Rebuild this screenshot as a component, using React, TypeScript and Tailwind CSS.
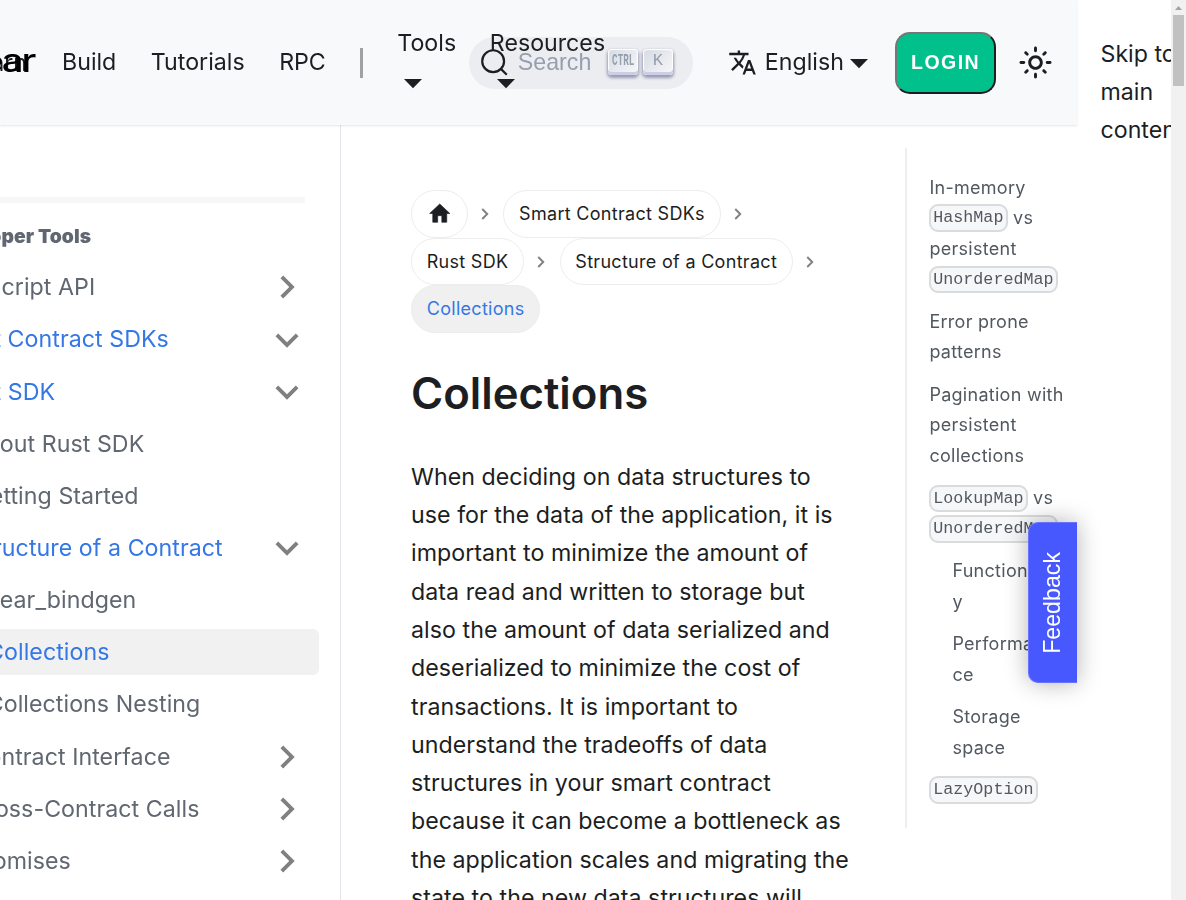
import React from "react";
import { MdTranslate } from "react-icons/md";

type Item = { label: string; indent: string; open?: boolean; arrow?: boolean; blue?: boolean; active?: boolean };

const items: Item[] = [
  { label: "JavaScript API", indent: "pl-[0px]", arrow: true },
  { label: "Smart Contract SDKs", indent: "pl-[1.4px]", arrow: true, open: true, blue: true },
  { label: "Rust SDK", indent: "pl-[18px]", arrow: true, open: true, blue: true },
  { label: "About Rust SDK", indent: "pl-[35px]" },
  { label: "Getting Started", indent: "pl-[38px]" },
  { label: "Structure of a Contract", indent: "pl-[36px]", arrow: true, open: true, blue: true },
  { label: "near_bindgen", indent: "pl-[51.5px]" },
  { label: "Collections", indent: "pl-[52.6px]", active: true, blue: true },
  { label: "Collections Nesting", indent: "pl-[52.2px]" },
  { label: "Contract Interface", indent: "pl-[36px]", arrow: true },
  { label: "Cross-Contract Calls", indent: "pl-[35px]", arrow: true },
  { label: "Promises", indent: "pl-[35px]", arrow: true },
];

function Caret({ className }: { className?: string }) {
  return (
    <svg viewBox="0 0 18 10" className={`h-[10px] w-[18px] shrink-0 fill-[#1c1e21] ${className ?? ""}`}>
      <path d="M0 0h18L9 9.3z" />
    </svg>
  );
}

function Arrow({ open }: { open?: boolean }) {
  return (
    <svg viewBox="0 0 24 24" className={`mr-[9.5px] h-[46px] w-[46px] shrink-0 fill-[#808080] ${open ? "rotate-180" : "rotate-90"}`}>
      <path d="M7.41 15.41L12 10.83l4.59 4.58L18 14l-6-6-6 6z" />
    </svg>
  );
}

function Sep() {
  return (
    <svg viewBox="0 0 8 12" className="ml-[12px] mr-[13px] mt-[1px] h-[12px] w-[10.5px] shrink-0 fill-none stroke-[#808080] stroke-[1.9]">
      <path d="M1 1l5 5-5 5" />
    </svg>
  );
}

function Pill({ children, active }: { children: React.ReactNode; active?: boolean }) {
  return (
    <span className={`flex h-[47.5px] items-center rounded-full border border-[#ededed] px-[14.7px] pt-[1.5px] ${active ? "bg-[#f0f0f0] text-[#3578e5]" : ""}`}>
      {children}
    </span>
  );
}

function Code({ children }: { children: React.ReactNode }) {
  return (
    <code className="-ml-[0.4px] rounded-[9px] border-2 border-[#dadbdd] bg-[#f6f7f8] px-[2.3px] py-[2.4px] align-[1.4px] font-['Liberation_Mono',monospace] text-[16.7px] leading-none tracking-normal">
      {children}
    </code>
  );
}

function Key({ children }: { children: React.ReactNode }) {
  return (
    <kbd className="mb-[2px] flex h-[26px] w-[30px] items-center justify-center rounded-[4px] bg-linear-[-225deg,#d5dbe4,#f8f8f8] pb-[1px] text-[#969faf] shadow-[inset_0_-3px_0_0_#cdcde6,inset_0_0_1px_1px_#fff,0_2px_3px_1px_rgba(30,35,90,0.4)]">
      {children}
    </kbd>
  );
}

export default function App() {
  return (
    <div className="flex h-[900px] w-[1186px] overflow-hidden bg-white font-['Inter',sans-serif] text-[23.2px] leading-[38.28px] text-[#1c1e21]">
      <div className="relative flex w-[1077px] shrink-0 flex-col">
        <header className="z-10 flex h-[125px] shrink-0 items-center bg-[#f8f9fb] shadow-[0_1px_2px_0_rgba(0,0,0,0.1)] will-change-transform">
          <div className="relative h-[38px] w-[62px] shrink-0 overflow-hidden">
            <span className="absolute right-[35px] top-0">Learn</span>
            <span className="absolute right-[27px] top-[-2px] origin-right scale-x-[1.2] text-[32px] font-medium tracking-[-1.6px] text-black">near</span>
          </div>
          <span>Build</span>
          <span className="ml-[34.5px]">Tutorials</span>
          <span className="ml-[34.5px]">RPC</span>
          <span className="ml-[34.5px] h-[30px] w-[2.5px] bg-[#a0a1a3]" />
          <span className="relative z-10 ml-[34.5px] flex w-[58px] flex-col">
            <span>Tools</span>
            <span className="flex h-[38px] items-center pl-[7px] pt-[4px]"><Caret /></span>
          </span>
          <span className="relative z-10 ml-[34.5px] flex w-[115px] flex-col">
            <span>Resources</span>
            <span className="flex h-[38px] items-center pl-[7.5px] pt-[4px]"><Caret /></span>
          </span>
          <div className="ml-[-136px] flex h-[52px] w-[224px] shrink-0 items-center rounded-full bg-[#ebedf0] pl-[11.5px] font-['Liberation_Sans',sans-serif] text-[#969faf]">
            <svg viewBox="0 0 20 20" className="h-[29px] w-[29px] fill-none stroke-[#1c1e21] stroke-[1.5]" strokeLinecap="round">
              <path d="M14.386 14.386l4.0877 4.0877-4.0877-4.0877c-2.9418 2.9419-7.7115 2.9419-10.6533 0-2.9419-2.9418-2.9419-7.7115 0-10.6533 2.9418-2.9419 7.7115-2.9419 10.6533 0 2.9419 2.9418 2.9419 7.7115 0 10.6533z" />
            </svg>
            <span className="ml-[8.5px] w-[90px]">Search</span>
            <span className="flex gap-[5px]">
              <Key><span className="scale-x-[0.58] text-[16px] font-bold">CTRL</span></Key>
              <Key><span className="text-[17px]">K</span></Key>
            </span>
          </div>
          <MdTranslate className="ml-[35.5px] h-[29px] w-[29px] shrink-0" />
          <span className="ml-[7.5px]">English</span>
          <Caret className="ml-[6px] mt-[2px]" />
          <button className="ml-[27px] h-[62px] w-[101.5px] shrink-0 rounded-[15px] border-2 border-b-[#1c1e21] border-l-[#767676] border-r-[#1c1e21] border-t-[#767676] bg-[#00c08b] font-['Liberation_Sans',sans-serif] text-[19.5px] font-bold tracking-[1.45px] text-white">
            LOGIN
          </button>
          <svg viewBox="0 0 24 24" className="ml-[22px] h-[35px] w-[35px] shrink-0 fill-[#1c1e21]">
            <path d="M12,9c1.65,0,3,1.35,3,3s-1.35,3-3,3s-3-1.35-3-3S10.35,9,12,9 M12,7c-2.76,0-5,2.24-5,5s2.24,5,5,5s5-2.24,5-5 S14.76,7,12,7L12,7z M2,13l2,0c0.55,0,1-0.45,1-1s-0.45-1-1-1l-2,0c-0.55,0-1,0.45-1,1S1.45,13,2,13z M20,13l2,0c0.55,0,1-0.45,1-1 s-0.45-1-1-1l-2,0c-0.55,0-1,0.45-1,1S19.45,13,20,13z M11,2v2c0,0.55,0.45,1,1,1s1-0.45,1-1V2c0-0.55-0.45-1-1-1S11,1.45,11,2z M11,20v2c0,0.55,0.45,1,1,1s1-0.45,1-1v-2c0-0.55-0.45-1-1-1C11.45,19,11,19.45,11,20z M5.99,4.58c-0.39-0.39-1.03-0.39-1.41,0 c-0.39,0.39-0.39,1.03,0,1.41l1.06,1.06c0.39,0.39,1.03,0.39,1.41,0s0.39-1.03,0-1.41L5.99,4.58z M18.36,16.95 c-0.39-0.39-1.03-0.39-1.41,0c-0.39,0.39-0.39,1.03,0,1.41l1.06,1.06c0.39,0.39,1.03,0.39,1.41,0c0.39-0.39,0.39-1.03,0-1.41 L18.36,16.95z M19.42,5.99c0.39-0.39,0.39-1.03,0-1.41c-0.39-0.39-1.03-0.39-1.41,0l-1.06,1.06c-0.39,0.39-0.39,1.03,0,1.41 s1.03,0.39,1.41,0L19.42,5.99z M7.05,18.36c0.39-0.39,0.39-1.03,0-1.41c-0.39-0.39-1.03-0.39-1.41,0l-1.06,1.06 c-0.39,0.39-0.39,1.03,0,1.41s1.03,0.39,1.41,0L7.05,18.36z" />
          </svg>
        </header>

        <div className="flex h-[775px]">
          <aside className="w-[341px] shrink-0 overflow-hidden border-r border-[#e3e4e9] pt-[72px] text-[#606770] will-change-transform">
            <div className="ml-[-65.5px] tracking-[0.05px]">
              <div className="mr-[35px] h-[6px] bg-[#f7f7f7]" />
              <div className="mt-[14px] text-[19.3px] font-black">Developer Tools</div>
              <nav className="mt-[9.1px] flex flex-col gap-[6.17px]">
                {items.map((it) => (
                  <div key={it.label} className={`mr-[21px] flex h-[46px] items-center justify-between rounded-[6px] whitespace-nowrap ${it.indent} ${it.blue ? "text-[#3578e5]" : ""} ${it.active ? "bg-[#f1f1f1]" : ""}`}>
                    <span>{it.label}</span>
                    {it.arrow && <Arrow open={it.open} />}
                  </div>
                ))}
              </nav>
            </div>
          </aside>

          <main className="w-[564px] shrink-0 overflow-hidden pl-[70px] pt-[65px]">
            <div className="text-[18px] tracking-[0.3px]">
              <div className="flex items-center">
                <Pill>
                  <svg viewBox="0 0 24 24" className="mb-[3px] h-[25px] w-[25.5px] scale-y-[1.05] fill-[#1c1e21]"><path d="M10 20v-6h4v6h4.7v-8h3L12 3.3 2.3 12h3v8z" stroke="#1c1e21" strokeWidth=".6" strokeLinejoin="round" /></svg>
                </Pill>
                <Sep /><Pill>Smart Contract SDKs</Pill><Sep />
              </div>
              <div className="flex items-center"><Pill>Rust SDK</Pill><Sep /><Pill>Structure of a Contract</Pill><Sep /></div>
              <div className="flex items-center"><Pill active>Collections</Pill></div>
            </div>
            <h1 className="mt-[32px] text-[43.7px] font-semibold leading-[58px]">Collections</h1>
            <p className="mt-[35.4px] w-[445px] whitespace-pre-line tracking-[0.04px]">
              {"When deciding on data structures to\nuse for the data of the application, it is\nimportant to minimize the amount of\ndata read and written to storage but\nalso the amount of data serialized and\ndeserialized to minimize the cost of\ntransactions. It is important to\nunderstand the tradeoffs of data\nstructures in your smart contract\nbecause it can become a bottleneck as\nthe application scales and migrating the\nstate to the new data structures will"}
            </p>
          </main>

          <div className="mt-[23px] h-[680px] w-[172px] shrink-0 border-l-2 border-[#eeeeee] pl-[22.4px] pt-[24.6px] text-[18px] leading-[30.6px] tracking-[0.28px] text-[#525860] will-change-transform">
            <ul className="flex flex-col gap-[11.8px] whitespace-nowrap">
              <li>In-memory<br /><Code>HashMap</Code> vs<br />persistent<br /><Code>UnorderedMap</Code></li>
              <li>Error prone<br />patterns</li>
              <li>Pagination with<br />persistent<br />collections</li>
              <li><Code>LookupMap</Code> vs<br /><Code>UnorderedMap</Code></li>
              <li className="pl-[23px]">Functionalit<br />y</li>
              <li className="pl-[23px]">Performan<br />ce</li>
              <li className="pl-[23px]">Storage<br />space</li>
              <li><Code>LazyOption</Code></li>
            </ul>
          </div>
        </div>

        <button className="absolute right-0 top-[522px] z-20 flex h-[161px] w-[49px] items-center justify-center rounded-l-[10px] border border-r-0 border-[#6973ff] bg-[#4858ff] pr-[1.5px] font-['Liberation_Sans',sans-serif] text-white shadow-[0_0_23px_rgba(0,0,0,0.3)]">
          <span className="rotate-180 [writing-mode:vertical-rl]">Feedback</span>
        </button>
      </div>

      <div className="w-[94px] shrink-0 overflow-hidden whitespace-nowrap pl-[23.5px] pt-[34.6px]">
        Skip to<br />main<br />content
      </div>
      <div className="flex w-[15px] shrink-0 flex-col items-center bg-[#f1f1f1]">
        <svg viewBox="0 0 15 15" className="h-[15px] w-[15px] fill-[#a3a3a3]"><path d="M4 10h7L7.5 6z" /></svg>
        <div className="h-[71px] w-[11px] bg-[#c1c1c1]" />
      </div>
    </div>
  );
}
